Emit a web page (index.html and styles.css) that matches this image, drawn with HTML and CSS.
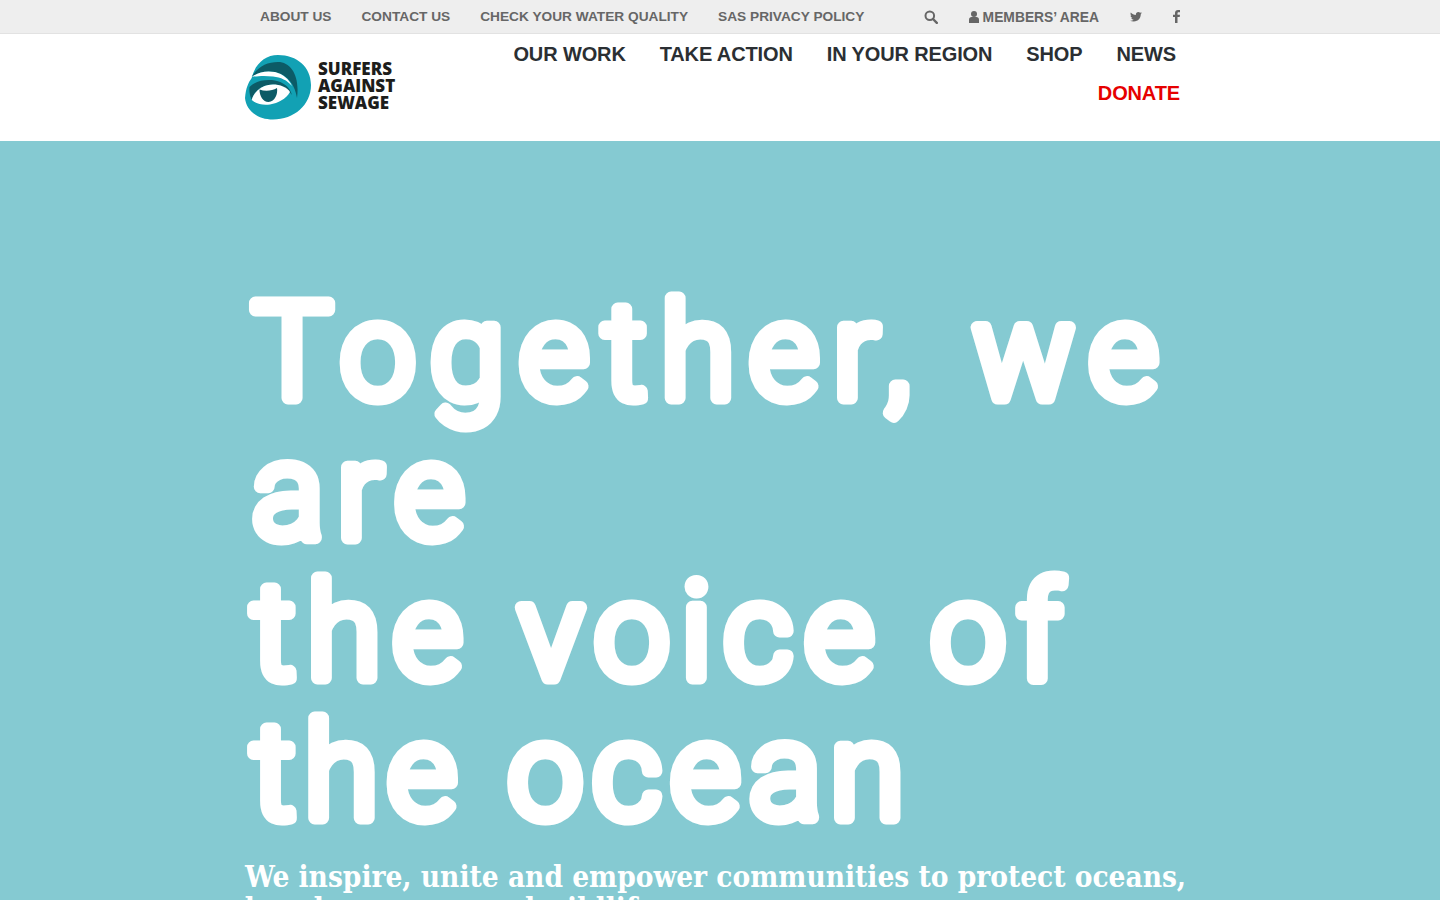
FILE: index.html
```html
<!DOCTYPE html>
<html lang="en">
<head>
    <meta charset="UTF-8">
    <meta name="viewport" content="width=device-width, initial-scale=1.0">
    <title>Surfers Against Sewage</title>
    <link rel="stylesheet" href="styles.css">
</head>
<body>

    <div class="top-bar">
        <div class="container top-bar-inner">
            <nav class="top-links">
                <a href="#">About us</a>
                <a href="#">Contact us</a>
                <a href="#">Check your water quality</a>
                <a href="#">SAS Privacy Policy</a>
            </nav>
            <div class="top-tools">
                <a href="#" class="tool-icon" aria-label="Search">
                    <svg width="14" height="14" viewBox="0 0 14 14"><circle cx="5.8" cy="5.8" r="4.3" fill="none" stroke="currentColor" stroke-width="2"/><path d="M9 9l3.8 3.8" stroke="currentColor" stroke-width="2.4" stroke-linecap="round"/></svg>
                </a>
                <a href="#" class="members-link">
                    <svg width="10" height="12" viewBox="0 0 10 12"><circle cx="5" cy="3" r="3" fill="currentColor"/><path d="M0 12V8.5C0 7 1.2 6 2.5 6h5C8.800 6 10 7 10 8.500V12z" fill="currentColor"/></svg>
                    Members’ Area
                </a>
                <a href="#" class="tool-icon" aria-label="Twitter">
                    <svg width="12" height="10" viewBox="0 0 24 20"><path d="M24 2.400c-.9.400-1.800.700-2.800.800 1-.6 1.800-1.600 2.200-2.700-1 .6-2 1-3.100 1.200C19.300.7 18 0 16.600 0c-2.700 0-4.900 2.200-4.900 4.900 0 .4 0 .8.100 1.100C7.700 5.800 4.100 3.900 1.700.9c-.4.700-.7 1.600-.7 2.500 0 1.700.9 3.200 2.200 4.100-.8 0-1.600-.2-2.200-.6v.1c0 2.400 1.700 4.400 3.900 4.800-.4.100-.8.200-1.300.2-.3 0-.6 0-.9-.1.600 2 2.400 3.400 4.600 3.400-1.700 1.300-3.800 2.100-6.100 2.100-.4 0-.8 0-1.200-.1C2.200 18.200 4.800 19 7.500 19c9.100 0 14-7.500 14-14v-.6c1-.7 1.800-1.600 2.500-2z" fill="currentColor"/></svg>
                </a>
                <a href="#" class="tool-icon" aria-label="Facebook">
                    <svg width="7" height="13" viewBox="0 0 7 13"><path d="M2 13V7H0V4.700h2V3C2 1 3.200 0 5 0h2v2.300H5.700C4.800 2.300 4.500 2.700 4.500 3.400v1.300H7L6.700 7H4.500v6z" fill="currentColor"/></svg>
                </a>
            </div>
        </div>
    </div>

    <header class="site-header">
        <div class="container header-inner">
            <a href="#" class="logo">
                <svg width="66" height="66" viewBox="0 0 66 66">
                    <path d="M6.700 24C10 10 20 1 33 1C52 1 66 13 66 31C66 51 49 65.500 28 65.500C12 65.500 1 56 0 44C1 34 3 29 6.700 24Z" fill="#12a1b4"/>
                    <path d="M6.700 23C12 13 22 8 33 8C46 8 55 22 52 44C50 32 44 21 30 18C21 16.500 13 18 6.700 23Z" fill="#0c5b66"/>
                    <path d="M6.700 23C13 18 21 16.500 30 18C38 20 44 25 47 32C42 26 36 23.500 28 22.500C20 21.500 12 22 6.700 23Z" fill="#fff"/>
                    <path d="M4.500 33C10 27 20 25 30 26.500C38 28 45 33 47 41C42 34 35 30.500 28 30.500C18 30.500 9 37 6.700 46C5 42 4 38 4.500 33Z" fill="#0c5b66"/>
                    <path d="M6.700 46C9 37 18 30.500 28 30.500C35 30.500 42 33 45 38C41 45 33 49 25 50.500C18 51.500 11 50 6.700 46Z" fill="#fff"/>
                    <path d="M14.500 35.500C20 37.500 27 37 32 34C33 40 30 47.500 23.500 48C18 48 14.500 42 14.500 35.500Z" fill="#0c5b66"/>
                </svg>
                <span class="logo-text">Surfers<br>Against<br>Sewage</span>
            </a>
            <nav class="main-nav">
                <a href="#">Our work</a>
                <a href="#">Take action</a>
                <a href="#">In your region</a>
                <a href="#">Shop</a>
                <a href="#">News</a>
                <a href="#" class="donate">Donate</a>
            </nav>
        </div>
    </header>

    <section class="hero">
        <div class="container">
            <h1>
                <svg class="hero-title" width="950" height="570" viewBox="0 0 950 570">
                    <text x="7" y="113" textLength="906">Together, we</text>
                    <text x="7" y="253" textLength="212">are</text>
                    <text x="7" y="393" textLength="810">the voice of</text>
                    <text x="7" y="533" textLength="652">the ocean</text>
                </svg>
            </h1>
            <p class="hero-sub">We inspire, unite and empower communities to protect oceans, beaches, waves and wildlife.</p>
        </div>
    </section>

</body>
</html>
```
FILE: styles.css
```css
html, body {
    height: 900px;
    overflow: hidden;
}
body {
    margin: 0;
    font-family: "Liberation Sans", Arial, sans-serif;
    background-color: #fff;
}
a {
    text-decoration: none;
    color: inherit;
}
.container {
    width: 950px;
    margin: 0 auto;
    padding-right: 15px;
    box-sizing: border-box;
}
.top-bar {
    height: 33px;
    background-color: #eeeeee;
    border-bottom: 1px solid #e2e2e2;
    color: #666;
}
.top-bar-inner {
    display: flex;
    justify-content: space-between;
    align-items: center;
    height: 33px;
    padding-left: 15px;
}
.top-links {
    display: flex;
    gap: 30px;
}
.top-links a {
    font-size: 13.7px;
    font-weight: 700;
    text-transform: uppercase;
}
.top-tools {
    display: flex;
    align-items: center;
    gap: 31px;
}
.tool-icon {
    display: flex;
}
.members-link {
    display: flex;
    align-items: center;
    gap: 4px;
    font-size: 13.85px;
    font-weight: 700;
    text-transform: uppercase;
}
.site-header {
    height: 107px;
}
.header-inner {
    display: flex;
    justify-content: space-between;
}
.logo {
    display: flex;
    align-items: center;
    gap: 7px;
    height: 66px;
    margin-top: 20px;
}
.logo-text {
    font-family: "Open Sans", sans-serif;
    font-size: 17px;
    line-height: 17px;
    font-weight: 800;
    color: #1d1d1b;
    text-transform: uppercase;
    margin-bottom: 3px;
}
.main-nav {
    display: flex;
    flex-wrap: wrap;
    justify-content: flex-end;
    align-content: flex-start;
    width: 700px;
    column-gap: 34px;
    padding: 1px 4px 0 0;
    box-sizing: border-box;
}
.main-nav a {
    font-size: 20px;
    line-height: 39px;
    font-weight: 700;
    letter-spacing: -0.13px;
    color: #2b2f33;
    text-transform: uppercase;
}
.main-nav .donate {
    color: #e60000;
    margin-right: -4px;
}
.hero {
    height: 760px;
    background-color: #85cad2;
    overflow: hidden;
}
.hero h1 {
    margin: 144px 0 0;
}
.hero-title {
    display: block;
    overflow: visible;
}
.hero-title text {
    font-family: "Roboto", sans-serif;
    font-size: 134px;
    font-weight: 300;
    fill: #fff;
    stroke: #fff;
    stroke-width: 13px;
    stroke-linejoin: round;
    stroke-linecap: round;
}
.hero-sub {
    margin: 6px -15px 0 0;
    font-family: "DejaVu Serif", serif;
    font-stretch: condensed;
    font-size: 29.5px;
    line-height: 32px;
    font-weight: 700;
    color: #fff;
}
```
